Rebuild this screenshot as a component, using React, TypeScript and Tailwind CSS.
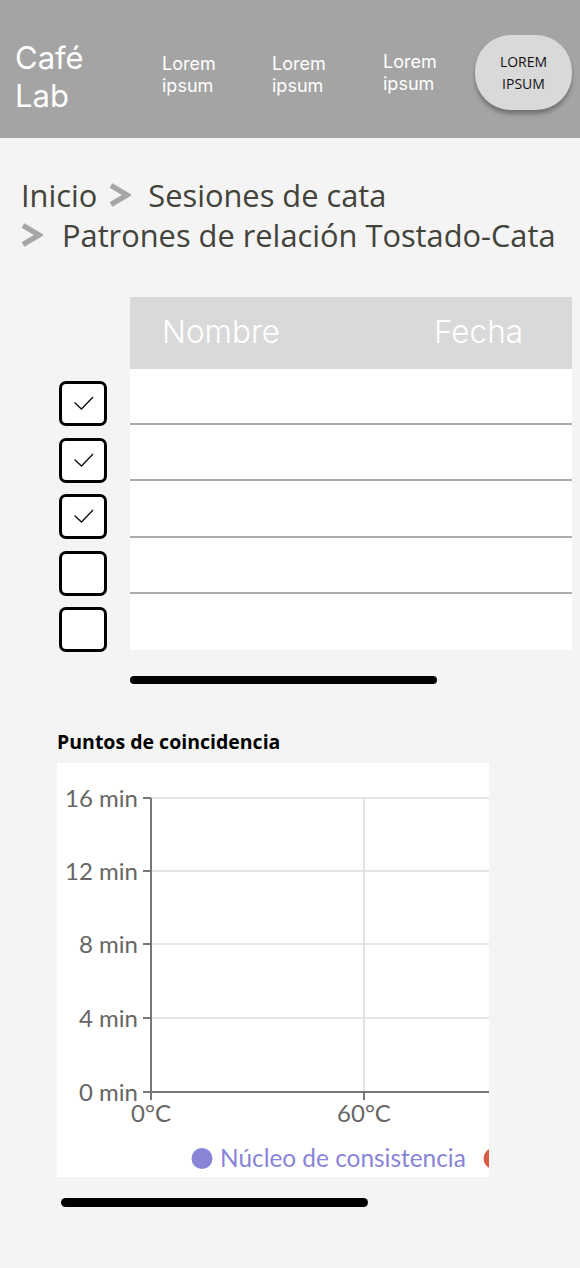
import React from 'react'

const navItems = [
  { label: ['Lorem', 'ipsum'], cls: 'mt-[53px] w-[110px]' },
  { label: ['Lorem', 'ipsum'], cls: 'mt-[53px] w-[111px]' },
  { label: ['Lorem', 'ipsum'], cls: 'mt-[51px] w-[92px]' },
]

const rows = [true, true, true, false, false]

const yTicks = [
  { label: '16 min', y: 35 },
  { label: '12 min', y: 108 },
  { label: '8 min', y: 181 },
  { label: '4 min', y: 255 },
  { label: '0 min', y: 329 },
]

function Chevron() {
  return (
    <svg width="22" height="24" viewBox="0 0 22 24" className="shrink-0">
      <polyline points="2,2.5 18,12 2,21.5" fill="none" stroke="#a6a6a6" strokeWidth="5.5" strokeLinejoin="miter" />
    </svg>
  )
}

function Checkbox({ checked }: { checked: boolean }) {
  return (
    <div className="w-[48px] h-[45px] border-[3px] border-black rounded-[7px] bg-white relative">
      {checked && (
        <svg width="42" height="39" viewBox="0 0 42 39" className="absolute left-0 top-0">
          <polyline points="12.5,18.5 19.5,25 31,13" fill="none" stroke="#111" strokeWidth="1.4" />
        </svg>
      )}
    </div>
  )
}

function Chart() {
  return (
    <svg width="432" height="414" viewBox="0 0 432 414" className="block" style={{ fontFamily: 'Lato, sans-serif' }}>
      {/* grid */}
      {yTicks.slice(0, 4).map((t) => (
        <line key={t.label} x1="94" x2="432" y1={t.y} y2={t.y} stroke="#dcdcdc" strokeWidth="1.6" />
      ))}
      <line x1="307" x2="307" y1="35" y2="329" stroke="#dcdcdc" strokeWidth="1.6" />
      {/* axes */}
      <line x1="94" x2="94" y1="35" y2="330" stroke="#777" strokeWidth="2" />
      <line x1="93" x2="432" y1="329" y2="329" stroke="#777" strokeWidth="2" />
      {yTicks.map((t) => (
        <g key={t.label}>
          <line x1="86" x2="94" y1={t.y} y2={t.y} stroke="#777" strokeWidth="2" />
          <text x="81" y={t.y + 8.5} textAnchor="end" fontSize="24" fill="#666">
            {t.label}
          </text>
        </g>
      ))}
      <line x1="94" x2="94" y1="329" y2="337" stroke="#777" strokeWidth="2" />
      <line x1="307" x2="307" y1="329" y2="337" stroke="#777" strokeWidth="2" />
      <text x="94" y="359" textAnchor="middle" fontSize="24" fill="#666">0°C</text>
      <text x="307" y="359" textAnchor="middle" fontSize="24" fill="#666">60°C</text>
      {/* legend */}
      <circle cx="145" cy="395.5" r="10.5" fill="#8884d8" />
      <text x="163" y="404" fontSize="24.4" fill="#8884d8">Núcleo de consistencia</text>
      <circle cx="437" cy="395.5" r="10.5" fill="#d95b43" />
    </svg>
  )
}

export default function App() {
  return (
    <div className="min-h-screen w-[580px] bg-[#f4f4f4]" style={{ fontFamily: 'Inter, sans-serif' }}>
      {/* Header */}
      <header className="h-[138px] bg-[#a4a4a4] flex items-start">
        <div className="ml-[15px] mt-[39px] w-[147px] text-white text-[31px] leading-[38px]">
          Café
          <br />
          Lab
        </div>
        {navItems.map((n, i) => (
          <div key={i} className={`${n.cls} text-white text-[18px] leading-[22px]`}>
            {n.label[0]}
            <br />
            {n.label[1]}
          </div>
        ))}
        <button
          className="mt-[35px] w-[97px] h-[75px] rounded-[36px] bg-[#d9d9d9] shadow-[0_4px_4px_rgba(0,0,0,0.3)] text-[14px] leading-[22px] text-[#111] text-center"
          style={{ fontFamily: '"Open Sans", sans-serif' }}
        >
          LOREM
          <br />
          IPSUM
        </button>
      </header>

      {/* Breadcrumb */}
      <nav
        className="pt-[37px] text-[30.8px] leading-[40px] text-[#42433a]"
        style={{ fontFamily: '"Open Sans", sans-serif' }}
      >
        <div className="flex items-center pl-[21px]">
          <span>Inicio</span>
          <span className="ml-[12px] mr-[17px]">
            <Chevron />
          </span>
          <span>Sesiones de cata</span>
        </div>
        <div className="flex items-center pl-[21px]">
          <Chevron />
          <span className="ml-[19px]">Patrones de relación Tostado-Cata</span>
        </div>
      </nav>

      {/* Table with checkboxes */}
      <section className="mt-[42px] flex items-start">
        <div className="ml-[59px] mt-[84px] flex flex-col gap-[11.5px]">
          {rows.map((c, i) => (
            <Checkbox key={i} checked={c} />
          ))}
        </div>
        <div className="ml-[23px] w-[442px]">
          <div className="h-[72px] bg-[#d9d9d9] flex items-center pl-[32px] pb-[3px] text-white text-[31.5px] font-light">
            <span className="w-[272px]">Nombre</span>
            <span>Fecha</span>
          </div>
          {rows.map((_, i) => (
            <div
              key={i}
              className={`h-[56.2px] bg-white ${i < rows.length - 1 ? 'border-b-2 border-[#acacac]' : ''}`}
            />
          ))}
          <div className="mt-[26px] w-[307px] h-[8px] rounded-full bg-black" />
        </div>
      </section>

      {/* Chart */}
      <section className="pl-[57px] mt-[47px]">
        <h2
          className="text-[19.5px] leading-[22px] font-bold text-black"
          style={{ fontFamily: '"Open Sans", sans-serif' }}
        >
          Puntos de coincidencia
        </h2>
        <div className="mt-[10px] w-[432px] h-[414px] bg-white overflow-hidden">
          <Chart />
        </div>
        <div className="mt-[21px] ml-[4px] w-[307px] h-[9px] rounded-full bg-black" />
      </section>
    </div>
  )
}
